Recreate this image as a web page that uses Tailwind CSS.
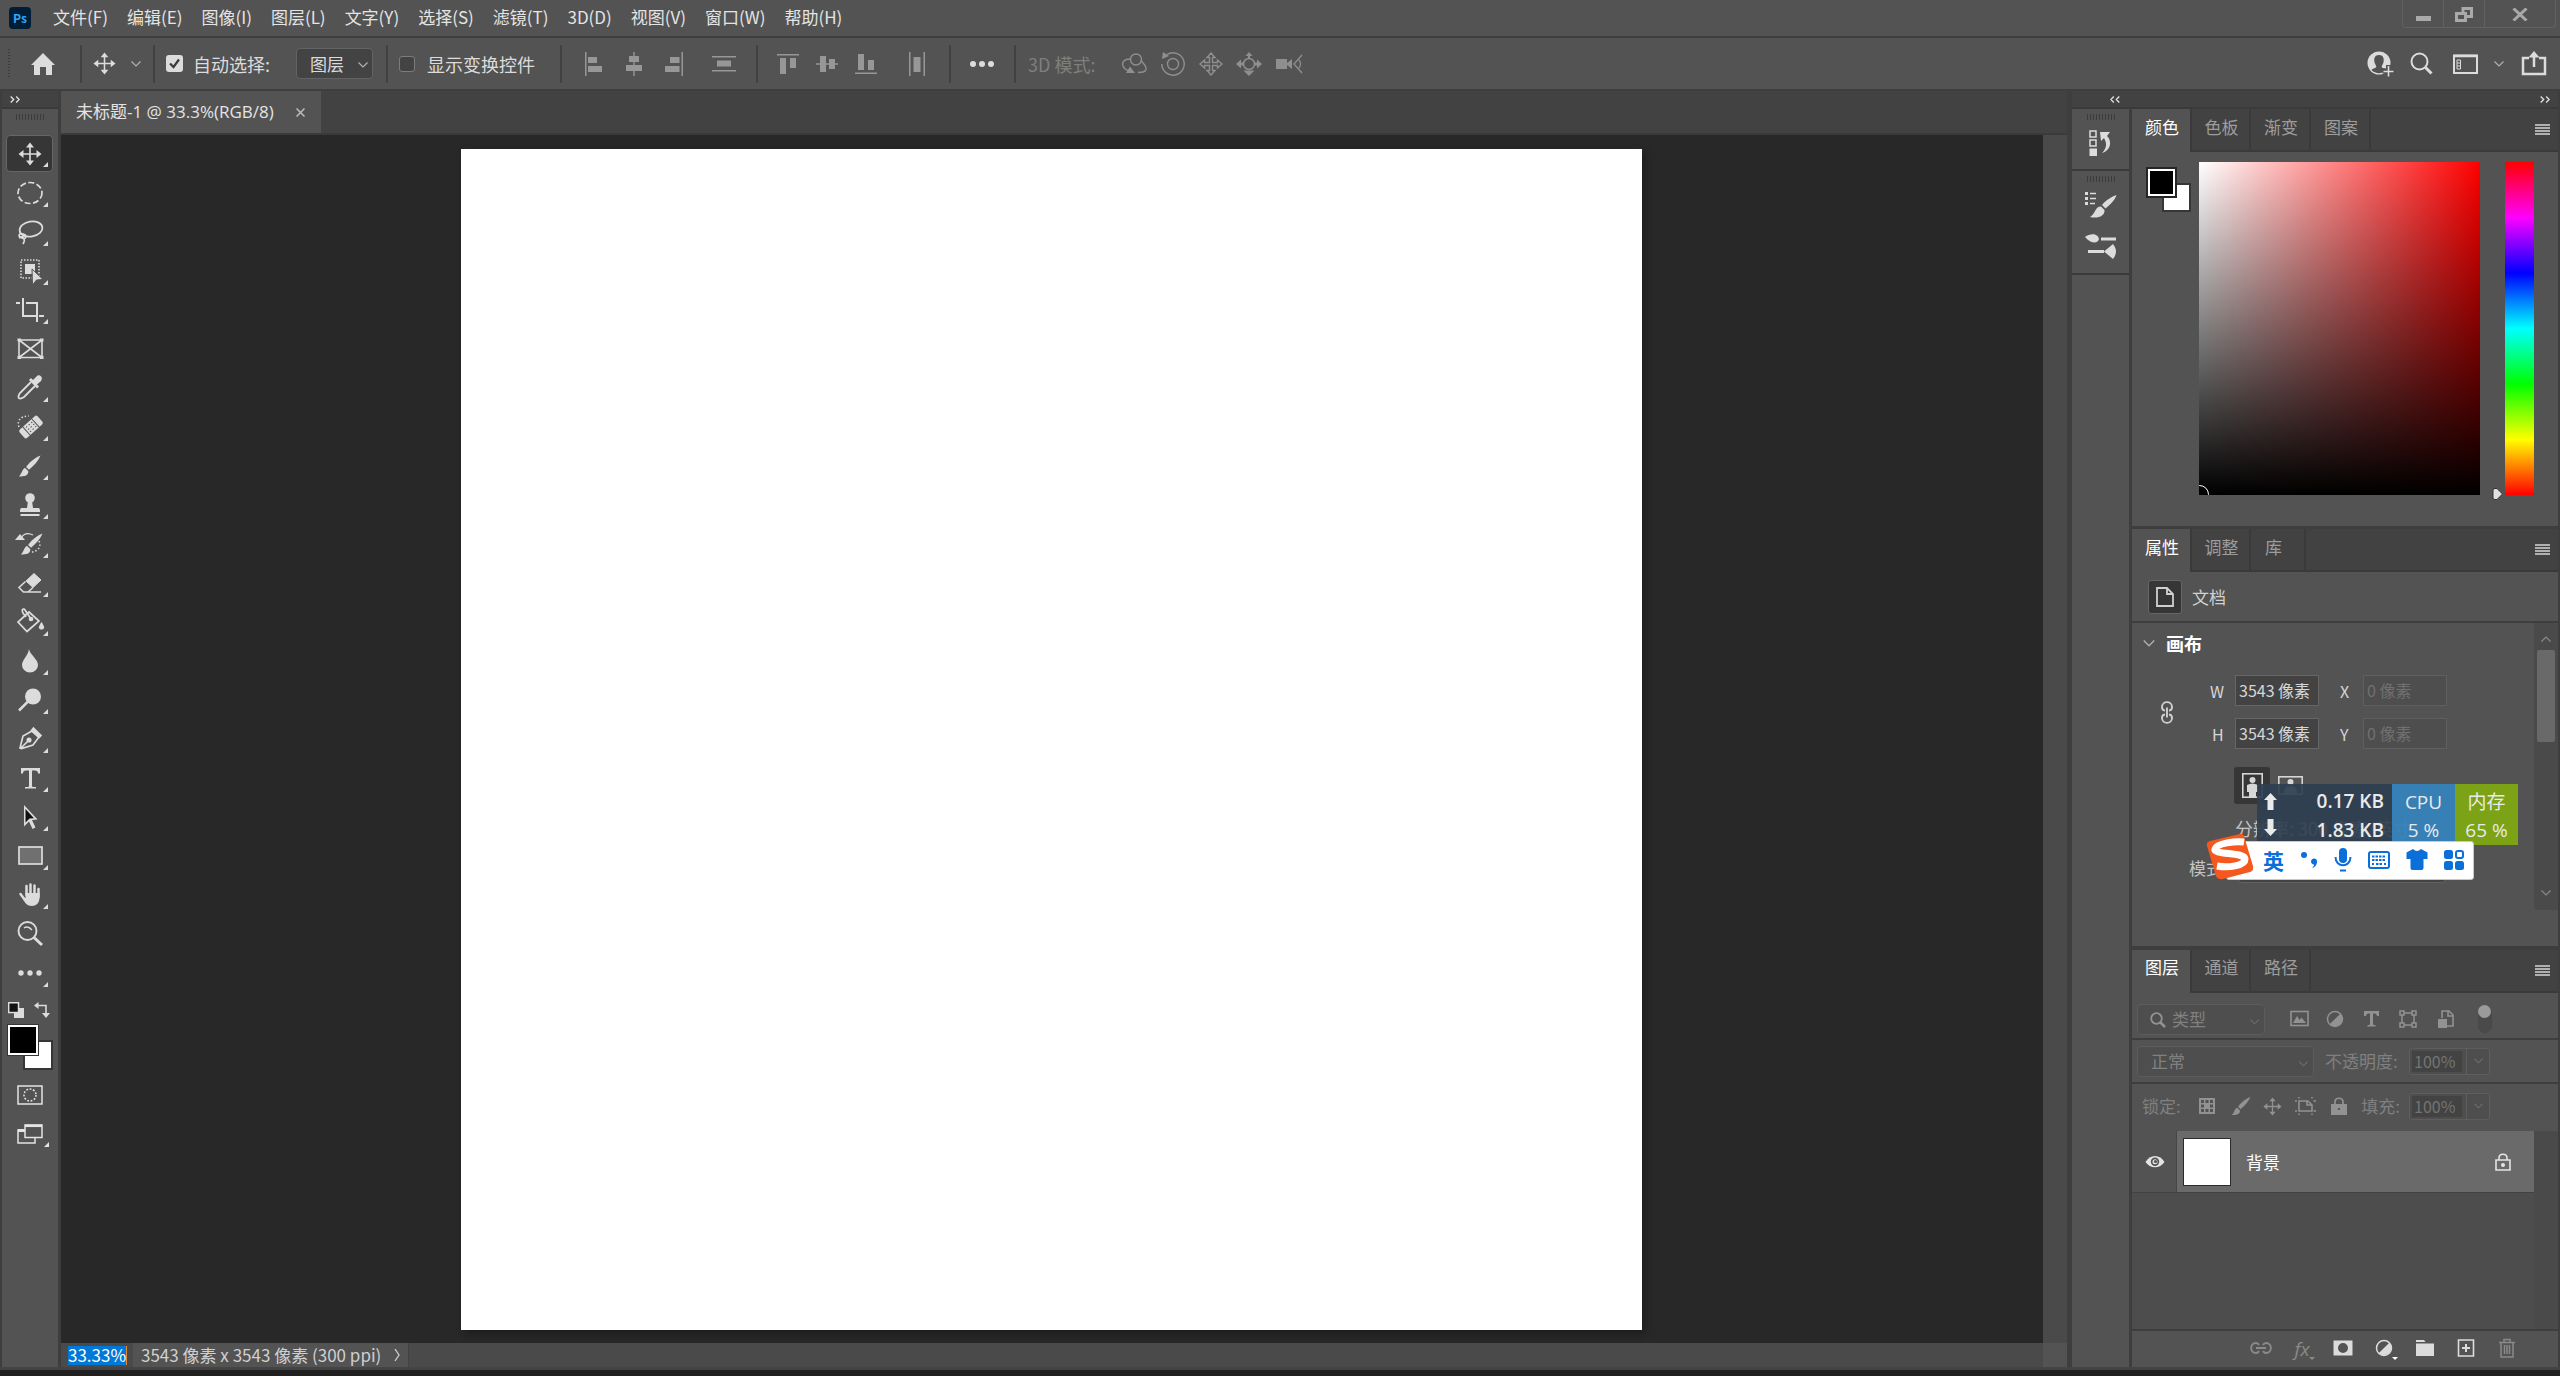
<!DOCTYPE html>
<html lang="zh-CN">
<head>
<meta charset="utf-8">
<title>未标题-1 @ 33.3%(RGB/8)</title>
<script src="https://cdn.jsdelivr.net/npm/@tailwindcss/browser@4"></script>
</head>
<body class="h-screen overflow-hidden bg-[#535353] font-['Noto_Sans_CJK_SC',sans-serif] text-[17px] leading-6 text-[#e4e4e4]">
<svg class="hidden">
  <symbol id="chev" viewBox="0 0 10 6"><path d="M.5 .5L5 5L9.5 .5" fill="none" stroke="currentColor" stroke-width="1.2"/></symbol>
  <symbol id="corner" viewBox="0 0 5 5"><path d="M5 0V5H0Z" fill="currentColor"/></symbol>
  <symbol id="move" viewBox="0 0 24 24"><path d="M12 3V21M3 12H21" stroke="currentColor" stroke-width="1.6"/><path d="M12 .5L16 5.500H8ZM12 23.500L8 18.500H16ZM.5 12L5.500 8V16ZM23.500 12L18.500 16V8Z" fill="currentColor"/></symbol>
  <symbol id="brush" viewBox="0 0 24 24"><path d="M23.500 1C17 3.500 11 9 8.500 13L11.500 16C16 12 21 7 23.500 1Z" fill="currentColor"/><path d="M7.500 14C4.500 14.500 5 18 1 23C6 23 11 22.500 10.800 17.500Z" fill="currentColor"/></symbol>
  <symbol id="menu" viewBox="0 0 15 11"><path d="M0 1H15M0 4H15M0 7H15M0 10H15" stroke="currentColor" stroke-width="2"/></symbol>
  <symbol id="grip" viewBox="0 0 28 6"><path d="M.5 0V6M3.500 0V6M6.500 0V6M9.500 0V6M12.500 0V6M15.500 0V6M18.500 0V6M21.500 0V6M24.500 0V6M27.500 0V6" stroke="#3c3c3c"/></symbol>
  <symbol id="dbl" viewBox="0 0 10 7"><path d="M.7 .5L3.700 3.500L.7 6.500M6.200 .5L9.200 3.500L6.200 6.500" fill="none" stroke="currentColor" stroke-width="1.3"/></symbol>
  <symbol id="half" viewBox="0 0 18 18"><circle cx="9" cy="9" r="7.500" fill="none" stroke="currentColor" stroke-width="1.500"/><path d="M14.300 3.700A7.500 7.500 0 0 1 3.700 14.300Z" fill="currentColor"/></symbol>
</svg>
<div class="flex h-full flex-col">

<!-- menu bar -->
<header class="flex h-[36px] shrink-0 items-start">
  <div class="ml-[9px] mt-[7px] flex size-[22px] items-center justify-center rounded-[4px] bg-[#001e36] text-[12px] leading-[22px] font-bold text-[#31a8ff]">Ps</div>
  <nav class="ml-[22px] flex gap-[19px] pt-[5px]">
    <a href="#">文件(F)</a><a href="#">编辑(E)</a><a href="#">图像(I)</a><a href="#">图层(L)</a><a href="#">文字(Y)</a><a href="#">选择(S)</a><a href="#">滤镜(T)</a><a href="#">3D(D)</a><a href="#">视图(V)</a><a href="#">窗口(W)</a><a href="#">帮助(H)</a>
  </nav>
  <div class="mr-[4px] ml-auto flex h-[28px] rounded-b border border-t-0 border-[#616161] text-[#a9a9a9]">
    <button aria-label="最小化" class="flex w-[41px] justify-center border-r border-[#616161] pt-[16px]"><span class="h-[5px] w-[15px] bg-[#a9a9a9]"></span></button>
    <button aria-label="还原" class="flex w-[41px] justify-center border-r border-[#616161] pt-[7px]"><svg width="18" height="15" fill="none" stroke="currentColor" stroke-width="3"><path d="M8 5V1.500H16.500V9.500H12"/><path d="M1.500 6.500H10.500V13.500H1.500Z"/></svg></button>
    <button aria-label="关闭" class="flex w-[70px] justify-center pt-[8px]"><svg width="16" height="13" stroke="currentColor" stroke-width="3"><path d="M1.500 .5L14.500 12.500M14.500 .5L1.500 12.500"/></svg></button>
  </div>
</header>

<!-- options bar -->
<div class="flex h-[55px] shrink-0 items-center border-y-2 border-[#3e3e3e] text-[18px] text-[#dcdcdc]">
  <svg class="ml-[8px]" width="2" height="30"><path d="M1 0V30" stroke="#3c3c3c" stroke-width="2" stroke-dasharray="1 2"/></svg>
  <button aria-label="主页" class="ml-[20px]"><svg width="26" height="24" viewBox="0 0 26 24"><path d="M13 1L25 13H22V23H16V15H10V23H4V13H1Z" fill="currentColor"/></svg></button>
  <span class="ml-[24px] h-[38px] w-[2px] bg-[#414141]"></span>
  <button aria-label="移动工具" class="ml-[11px] flex items-center gap-[15px]"><svg width="23" height="23"><use href="#move"/></svg><svg width="10" height="6" class="text-[#b0b0b0]"><use href="#chev"/></svg></button>
  <span class="ml-[12px] h-[38px] w-[2px] bg-[#414141]"></span>
  <label class="ml-[11px] flex items-center gap-[10px]">
    <span class="relative flex"><input type="checkbox" checked class="size-[17px] appearance-none rounded-[3px] bg-[#dcdcdc]"><svg class="absolute top-[3px] left-[3px]" width="11" height="11"><path d="M1 5.500L4.500 9L10 1.500" fill="none" stroke="#3a3a3a" stroke-width="2.200"/></svg></span>自动选择:</label>
  <div class="relative ml-[26px]"><select aria-label="自动选择" class="h-[31px] w-[77px] appearance-none rounded-[4px] border border-[#636363] bg-[#434343] pl-[13px] text-[17px] leading-6"><option>图层</option></select><svg class="absolute top-[14px] right-[5px] text-[#b0b0b0]" width="10" height="6"><use href="#chev"/></svg></div>
  <span class="ml-[13px] h-[38px] w-[2px] bg-[#414141]"></span>
  <label class="ml-[11px] flex items-center gap-[12px]"><input type="checkbox" class="size-[16px] appearance-none rounded-[3px] border border-[#7c7c7c] bg-[#434343]">显示变换控件</label>
  <span class="ml-[25px] h-[38px] w-[2px] bg-[#414141]"></span>
  <div class="ml-[20px] flex items-center gap-[16px] text-[#979797]">
    <button aria-label="左对齐"><svg width="24" height="24" viewBox="0 0 24 24" fill="currentColor"><path d="M3 0H4.500V24H3ZM6 5H15V11H6ZM6 14H20V20H6Z"/></svg></button>
    <button aria-label="水平居中对齐"><svg width="24" height="24" viewBox="0 0 24 24" fill="currentColor"><path d="M11.300 0H12.700V24H11.300ZM7 4H17V10H7ZM4 13H20V19H4Z"/></svg></button>
    <button aria-label="右对齐"><svg width="24" height="24" viewBox="0 0 24 24" fill="currentColor"><path d="M19.500 0H21V24H19.500ZM8 5H17.500V11H8ZM3 14H17.500V20H3Z"/></svg></button>
    <button aria-label="垂直分布" class="ml-[10px]"><svg width="24" height="24" viewBox="0 0 24 24" fill="currentColor"><path d="M0 4H24V5.500H0ZM5 8.500H19V14.500H5ZM0 18H24V19.500H0Z"/></svg></button>
  </div>
  <span class="ml-[20px] h-[38px] w-[2px] bg-[#414141]"></span>
  <div class="ml-[18px] flex items-center gap-[15px] text-[#979797]">
    <button aria-label="顶对齐"><svg width="24" height="24" viewBox="0 0 24 24" fill="currentColor"><path d="M1 2H23V3.500H1ZM4 6H10V22H4ZM14 6H20V16H14Z"/></svg></button>
    <button aria-label="垂直居中对齐"><svg width="24" height="24" viewBox="0 0 24 24" fill="currentColor"><path d="M1 11.200H23V12.800H1ZM5 4H11V20H5ZM14 7H20V17H14Z"/></svg></button>
    <button aria-label="底对齐"><svg width="24" height="24" viewBox="0 0 24 24" fill="currentColor"><path d="M1 20.500H23V22H1ZM4 2H10V18H4ZM14 8H20V18H14Z"/></svg></button>
    <button aria-label="水平分布" class="ml-[12px]"><svg width="24" height="24" viewBox="0 0 24 24" fill="currentColor"><path d="M4 0H5.500V24H4ZM8.500 5H15.500V20H8.500ZM18.500 0H20V24H18.500Z"/></svg></button>
  </div>
  <span class="ml-[20px] h-[38px] w-[2px] bg-[#414141]"></span>
  <button aria-label="更多选项" class="ml-[19px]"><svg width="24" height="6" fill="currentColor"><circle cx="3" cy="3" r="3"/><circle cx="12" cy="3" r="3"/><circle cx="21" cy="3" r="3"/></svg></button>
  <span class="ml-[20px] h-[38px] w-[2px] bg-[#414141]"></span>
  <span class="ml-[12px] w-[70px] whitespace-nowrap text-[#7f7f7f]">3D 模式:</span>
  <div class="ml-[23px] flex items-center gap-[13px] text-[#8f8f8f]">
    <svg width="26" height="24" viewBox="0 0 26 24" fill="none" stroke="currentColor" stroke-width="1.400"><circle cx="15" cy="7.500" r="5.500"/><path d="M9 7C3 7 .8 10 2 14C3 16 4.500 18 7 18.500M20 8C22 12 26 14 25 17.500C24 20.500 21 20.500 17 20.500"/><path d="M9 14.500L5 21H14Z" fill="currentColor" stroke="none"/></svg>
    <svg width="26" height="24" viewBox="0 0 26 24" fill="none" stroke="currentColor" stroke-width="1.400"><circle cx="13" cy="12" r="5.500"/><path d="M7 2.500A11.200 11.200 0 1 1 1.800 12"/><path d="M2 7L3 0L9 4Z" fill="currentColor" stroke="none"/></svg>
    <svg width="24" height="24" viewBox="0 0 24 24" fill="none" stroke="currentColor" stroke-width="1.400"><path d="M12 1L16 5.500H13.500V10.500H18.500V8L23 12L18.500 16V13.500H13.500V18.500H16L12 23L8 18.500H10.500V13.500H5.500V16L1 12L5.500 8V10.500H10.500V5.500H8Z"/></svg>
    <svg width="26" height="24" viewBox="0 0 26 24" fill="currentColor"><circle cx="13" cy="12" r="5.500" fill="none" stroke="currentColor" stroke-width="1.500"/><path d="M13 0L16.500 4H14V6H12V4H9.500ZM13 24L7.500 18.500H18.500ZM0 12L5 7.500V10.500H8V13.500H5V16.500ZM26 12L21 7.500V10.500H18V13.500H21V16.500Z"/></svg>
    <svg width="28" height="24" viewBox="0 0 28 24" fill="currentColor"><path d="M1 7H12V17H1ZM12 11L17 7V17L12 13Z"/><path d="M27 3L19 12L27 21M24 8C26 10 26 14 24 16" fill="none" stroke="currentColor" stroke-width="1.300"/></svg>
  </div>
  <div class="mr-[13px] ml-auto flex items-center">
    <button aria-label="帐户"><svg width="27" height="26" viewBox="0 0 27 26"><circle cx="12" cy="12" r="11.500" fill="currentColor"/><path d="M12 4C8 4 7 7 7.300 10C7.600 13 9 14 9.300 15.500C9 17.500 6 17 4.500 19C8 23 15 23 18 20L18.500 17.500C16 17 15 17 14.700 15.500C15 14 16.400 13 16.700 10C17 7 16 4 12 4Z" fill="#535353"/><path d="M21.500 14V26M15.500 20H27" stroke="#535353" stroke-width="5"/><path d="M21.500 15V25.500M16.500 20.500H26.500" stroke="currentColor" stroke-width="1.600"/></svg></button>
    <button aria-label="搜索" class="ml-[16px]"><svg width="23" height="23" fill="none" stroke="currentColor"><circle cx="9.500" cy="9.500" r="8" stroke-width="2"/><path d="M15.500 15.500L21.500 21.500" stroke-width="3"/></svg></button>
    <button aria-label="工作区" class="ml-[20px]"><svg width="25" height="20" fill="none" stroke="currentColor"><path d="M1 1.500H24V19H1Z" stroke-width="2"/><path d="M1 2H24" stroke-width="2.500"/><path d="M4 6H7.500V15H4ZM4 9H7M4 12H7"/></svg></button>
    <svg width="10" height="6" class="ml-[16px] text-[#b0b0b0]"><use href="#chev"/></svg>
    <button aria-label="共享" class="ml-[17px]"><svg width="26" height="25" fill="none" stroke="currentColor" stroke-width="2.500"><path d="M8 7H2V23H24V7H18M13 4V16"/><path d="M13 0L18.500 6.500H7.500Z" fill="currentColor" stroke="none"/></svg></button>
  </div>
</div>

<!-- workspace -->
<div class="flex min-h-0 flex-1">

  <!-- tools -->
  <aside class="flex w-[61px] shrink-0 flex-col border-r-[3px] border-l-2 border-[#3e3e3e]">
    <div class="flex h-[18px] shrink-0 items-center border-b-2 border-[#3a3a3a] bg-[#424242] pl-[8px]"><svg width="10" height="7"><use href="#dbl"/></svg></div>
    <div class="flex h-[25px] shrink-0 justify-center pt-[5px]"><svg width="28" height="6"><use href="#grip"/></svg></div>
    <div class="flex flex-col pr-[5px] pl-[4px] text-[#dcdcdc]">
      <button aria-label="移动" class="relative my-px flex h-[37px] items-center justify-center rounded-[4px] border border-[#666] bg-[#363636]"><svg width="24" height="24"><use href="#move"/></svg><svg class="absolute right-[4px] bottom-[4px]" width="5" height="5"><use href="#corner"/></svg></button>
      <button aria-label="椭圆选框" class="relative flex h-[39px] items-center justify-center"><svg width="30" height="30" fill="none" stroke="currentColor" stroke-width="1.700"><ellipse cx="15" cy="15" rx="12" ry="10.500" stroke-dasharray="6 2.500"/></svg><svg class="absolute right-[5px] bottom-[5px]" width="5" height="5"><use href="#corner"/></svg></button>
      <button aria-label="套索" class="relative flex h-[39px] items-center justify-center"><svg width="30" height="30" fill="none" stroke="currentColor" stroke-width="1.700"><ellipse cx="16" cy="12" rx="11.500" ry="7.500" transform="rotate(-10 16 12)"/><ellipse cx="7.500" cy="19" rx="3.500" ry="2" transform="rotate(20 7.500 19)"/><path d="M4 21L11 18M7 20C11 22 9 25 8 27"/></svg><svg class="absolute right-[5px] bottom-[5px]" width="5" height="5"><use href="#corner"/></svg></button>
      <button aria-label="对象选择" class="relative flex h-[39px] items-center justify-center"><svg width="30" height="30"><rect x="6" y="4" width="18" height="18" fill="none" stroke="currentColor" stroke-width="1.600" stroke-dasharray="1.500 1.500"/><path d="M10 8H20V18H10Z" fill="currentColor"/><path d="M17 13L28 23.500L21.500 24L17.500 29Z" fill="currentColor" stroke="#535353"/></svg><svg class="absolute right-[5px] bottom-[5px]" width="5" height="5"><use href="#corner"/></svg></button>
      <button aria-label="裁剪" class="relative flex h-[39px] items-center justify-center"><svg width="30" height="30" fill="none" stroke="currentColor" stroke-width="2"><path d="M1 8H5M8 3V21H22M11 8H22V27M24 21H29"/></svg><svg class="absolute right-[5px] bottom-[5px]" width="5" height="5"><use href="#corner"/></svg></button>
      <button aria-label="图框" class="relative flex h-[39px] items-center justify-center"><svg width="30" height="30" fill="none" stroke="currentColor" stroke-width="1.600"><path d="M4 6H27V23.500H4ZM4 6L27 23.500M27 6L4 23.500"/><path d="M2.500 4.500H6V7.500H2.500ZM25 4.500H28.500V7.500H25ZM2.500 22H6V25H2.500ZM25 22H28.500V25H25Z" fill="currentColor" stroke="none"/></svg></button>
      <button aria-label="吸管" class="relative flex h-[39px] items-center justify-center"><svg width="30" height="30"><path d="M16 9L5 20C3 23 3 25 4.500 25.500C6 26 7.500 25 9 24L20 13" fill="none" stroke="currentColor" stroke-width="1.800"/><path d="M14 7L16 5L18 7L22 3C24 1 29 4 26 8L22 11.500L24 13.500L22 15.500Z" fill="currentColor"/></svg><svg class="absolute right-[5px] bottom-[5px]" width="5" height="5"><use href="#corner"/></svg></button>
      <button aria-label="污点修复" class="relative flex h-[39px] items-center justify-center"><svg width="30" height="30"><path d="M4 15C2 10 4 4 14 4" fill="none" stroke="currentColor" stroke-width="1.500" stroke-dasharray="1.500 2"/><g transform="rotate(-42 16 15)"><rect x="4" y="9.500" width="24" height="11" rx="2" fill="currentColor"/><path d="M10 9V21M22 9V21" stroke="#535353"/><path d="M12 12H21M12 15H21M12 18H21" stroke="#535353" stroke-dasharray="1.500 2"/></g></svg><svg class="absolute right-[5px] bottom-[5px]" width="5" height="5"><use href="#corner"/></svg></button>
      <button aria-label="画笔" class="relative flex h-[39px] items-center justify-center"><svg width="23" height="24"><use href="#brush"/></svg><svg class="absolute right-[5px] bottom-[5px]" width="5" height="5"><use href="#corner"/></svg></button>
      <button aria-label="仿制图章" class="relative flex h-[39px] items-center justify-center"><svg width="30" height="30" fill="currentColor"><circle cx="15" cy="8" r="4.800"/><path d="M13 11H17L18 18H24C25 19 25 20 25 22H5C5 20 5 19 6 18H12ZM5.500 24H24.500V26H5.500Z"/></svg><svg class="absolute right-[5px] bottom-[5px]" width="5" height="5"><use href="#corner"/></svg></button>
      <button aria-label="历史记录画笔" class="relative flex h-[39px] items-center justify-center"><svg width="30" height="30"><g transform="translate(5 3)"><use href="#brush" width="23" height="24"/></g><path d="M0 11L5 5L10 11Z" fill="currentColor"/><path d="M6 9C9 4 14 4 18 6" fill="none" stroke="currentColor" stroke-width="1.200"/><path d="M24 12C27 18 22 23 16 23" fill="none" stroke="currentColor" stroke-width="1.500" stroke-dasharray="1.500 2"/></svg><svg class="absolute right-[5px] bottom-[5px]" width="5" height="5"><use href="#corner"/></svg></button>
      <button aria-label="橡皮擦" class="relative flex h-[39px] items-center justify-center"><svg width="30" height="30"><path d="M11 13L19 5.500L26 12L18 19.500Z" fill="currentColor" stroke="currentColor"/><path d="M10.500 13.500L4 19.500L8.500 24H13L18 19.500M13 24H26" fill="none" stroke="currentColor" stroke-width="1.600"/></svg><svg class="absolute right-[5px] bottom-[5px]" width="5" height="5"><use href="#corner"/></svg></button>
      <button aria-label="油漆桶" class="relative flex h-[39px] items-center justify-center"><svg width="30" height="30" fill="none" stroke="currentColor" stroke-width="1.700"><path d="M14 5L3 15L12 24.500L24 14Z"/><path d="M16 12L10 3C9 1 6 2 8 6L11 10"/><circle cx="16" cy="12" r="1.500" fill="currentColor"/><path d="M26.500 15C24 19 23.500 20 24 21C25 23 28 23 29 21C29.500 20 29 19 26.500 15Z" fill="currentColor" stroke="none"/></svg><svg class="absolute right-[5px] bottom-[5px]" width="5" height="5"><use href="#corner"/></svg></button>
      <button aria-label="模糊" class="relative flex h-[39px] items-center justify-center"><svg width="30" height="30"><path d="M14 3C15 9 23 13 23 19A8 7.500 0 0 1 7 19C7 14 13 10 14 3Z" fill="currentColor"/></svg><svg class="absolute right-[5px] bottom-[5px]" width="5" height="5"><use href="#corner"/></svg></button>
      <button aria-label="减淡" class="relative flex h-[39px] items-center justify-center"><svg width="30" height="30"><circle cx="18" cy="11.500" r="8" fill="currentColor"/><path d="M12.500 17L4 25.500" stroke="currentColor" stroke-width="2.500"/></svg><svg class="absolute right-[5px] bottom-[5px]" width="5" height="5"><use href="#corner"/></svg></button>
      <button aria-label="钢笔" class="relative flex h-[39px] items-center justify-center"><svg width="30" height="30" fill="none" stroke="currentColor" stroke-width="1.700"><path d="M17 7L8 12L5 24L6.500 24.500L18 21L24 13ZM6 24L13 17"/><circle cx="14" cy="16" r="1.700" fill="currentColor"/><path d="M18.500 4L26 11.500L24 13.500L16.500 6.500Z" fill="currentColor"/></svg><svg class="absolute right-[5px] bottom-[5px]" width="5" height="5"><use href="#corner"/></svg></button>
      <button aria-label="文字" class="relative flex h-[39px] items-center justify-center"><svg width="30" height="30" fill="currentColor"><path d="M6 5H25V10.500H23C23 8 22 7.500 17 7.500V23C17 24 18 24 21 24V25.500H10V24C13 24 14 24 14 23V7.500C9 7.500 8 8 8 10.500H6Z"/></svg><svg class="absolute right-[5px] bottom-[5px]" width="5" height="5"><use href="#corner"/></svg></button>
      <button aria-label="路径选择" class="relative flex h-[39px] items-center justify-center"><svg width="30" height="30"><path d="M9 3V24.500L14 19.500L17.500 27L20.500 25.500L17 18L22.500 17.500Z" fill="currentColor"/><path d="M10.500 7V20.500L14.500 16.500L19 16.200Z" fill="#111"/></svg><svg class="absolute right-[5px] bottom-[5px]" width="5" height="5"><use href="#corner"/></svg></button>
      <button aria-label="矩形" class="relative flex h-[39px] items-center justify-center"><svg width="30" height="30"><rect x="4" y="6" width="23" height="17" fill="#707070" stroke="currentColor" stroke-width="1.700"/></svg><svg class="absolute right-[5px] bottom-[5px]" width="5" height="5"><use href="#corner"/></svg></button>
      <button aria-label="抓手" class="relative flex h-[39px] items-center justify-center"><svg width="30" height="30" fill="none" stroke="currentColor" stroke-width="2.500" stroke-linecap="round"><path d="M11.500 15V6M15.500 14V4.500M19.500 15V5.500M23.500 17V9M5.500 14L10 20"/><path d="M10.500 13H24.500V18C24.500 23 21 26 17 26C11 26 9 21 7.500 18L10.500 18Z" fill="currentColor" stroke="none"/></svg><svg class="absolute right-[5px] bottom-[5px]" width="5" height="5"><use href="#corner"/></svg></button>
      <button aria-label="缩放" class="relative flex h-[39px] items-center justify-center"><svg width="30" height="30" fill="none" stroke="currentColor"><circle cx="12.500" cy="12" r="9" stroke-width="1.900"/><path d="M19 18.500L27 26" stroke-width="3"/><path d="M9 9C11 7.500 14 7.500 17 11" stroke-width="1.500"/></svg></button>
      <button aria-label="编辑工具栏" class="relative flex h-[39px] items-center justify-center"><svg width="30" height="30" fill="currentColor"><circle cx="6" cy="15" r="2.700"/><circle cx="15" cy="15" r="2.700"/><circle cx="24" cy="15" r="2.700"/></svg><svg class="absolute right-[5px] bottom-[5px]" width="5" height="5"><use href="#corner"/></svg></button>
    </div>
    <div class="mt-[10px] flex justify-between pr-[8px] pl-[6px] text-[#dcdcdc]">
      <button aria-label="默认颜色"><svg width="16" height="16"><path d="M6 6H16V16H6Z" fill="currentColor"/><path d="M.7 .7H10.500V10.500H.7Z" fill="#111" stroke="currentColor" stroke-width="1.500"/></svg></button>
      <button aria-label="切换颜色"><svg width="16" height="16" fill="none" stroke="currentColor" stroke-width="1.600"><path d="M4 3.500H12V12"/><path d="M0 3.500L4.500 0V7ZM12 16L8 11H16Z" fill="currentColor" stroke="none"/></svg></button>
    </div>
    <div class="mt-[7px] ml-[6px] grid grid-cols-[15px_15px_15px] grid-rows-[15px_15px_15px]">
      <button aria-label="背景色" class="col-span-2 col-start-2 row-span-2 row-start-2 border-2 border-[#363636] bg-white"></button>
      <button aria-label="前景色" class="col-span-2 col-start-1 row-span-2 row-start-1 border-2 border-white bg-black outline outline-[#363636]"></button>
    </div>
    <button aria-label="快速蒙版" class="mt-[15px] ml-[15px] w-[26px]"><svg width="26" height="20" fill="none" stroke="currentColor"><rect x="1" y="1" width="24" height="18" stroke-width="1.500"/><circle cx="13" cy="10" r="6" stroke-width="1.500" stroke-dasharray="1.800 1.600"/></svg></button>
    <button aria-label="屏幕模式" class="relative mt-[19px] ml-[15px] w-[32px]"><svg width="26" height="20" fill="none" stroke="currentColor" stroke-width="1.500"><path d="M8 6H1V19H18V14"/><path d="M1 6.500H8" stroke-width="3"/><path d="M8 1H25V13.500H8Z" fill="#535353"/><path d="M8 1.800H25" stroke-width="2.500"/></svg><svg class="absolute right-0 -bottom-[3px]" width="5" height="5"><use href="#corner"/></svg></button>
  </aside>

  <!-- document -->
  <main class="flex min-w-0 flex-1 flex-col border-r-[5px] border-[#3e3e3e]">
    <div class="flex h-[44px] shrink-0 border-b-2 border-[#3a3a3a] bg-[#424242]">
      <div class="flex w-[260px] items-center bg-[#535353] pl-[15px] font-['Open_Sans','Noto_Sans_CJK_SC',sans-serif] whitespace-nowrap">未标题-1 @ 33.3%(RGB/8)<button aria-label="关闭" class="mr-[16px] ml-auto text-[#bdbdbd]"><svg width="9" height="9" stroke="currentColor" stroke-width="1.500"><path d="M.5 .5L8.500 8.500M8.500 .5L.5 8.500"/></svg></button></div>
    </div>
    <div class="flex min-h-0 flex-1">
      <div class="flex flex-1 items-center justify-center bg-[#282828] pr-[2px]"><div class="aspect-square h-[1181px] bg-white shadow-[3px_4px_8px_rgba(0,0,0,0.3)]"></div></div>
      <div class="w-[24px] bg-[#4a4a4a]"></div>
    </div>
    <div class="flex h-[24px] shrink-0 items-center bg-[#4a4a4a]">
      <input aria-label="缩放比例" value="33.33%" class="ml-[7px] h-[19px] w-[59px] border-r border-[#e08a3c] bg-[#0078d7] text-white">
      <div class="ml-[6px] flex h-[24px] w-[276px] items-center justify-between border-r border-[#424242] bg-[#535353] pr-[8px] pl-[8px] whitespace-nowrap text-[#d0d0d0]">3543 像素 x 3543 像素 (300 ppi)<svg width="6" height="14"><path d="M1 1L5 7L1 13" fill="none" stroke="currentColor" stroke-width="1.300"/></svg></div>
      <div class="ml-auto h-full w-[24px] bg-[#535353]"></div>
    </div>
  </main>

  <!-- right docks -->
  <div class="flex w-[488px] shrink-0 flex-col border-r-2 border-[#3e3e3e]">
    <div class="flex h-[18px] shrink-0 items-center justify-between border-b-2 border-[#3a3a3a] bg-[#424242] pr-[8px] pl-[38px]"><svg class="rotate-180" width="10" height="7"><use href="#dbl"/></svg><svg width="10" height="7"><use href="#dbl"/></svg></div>
    <div class="flex min-h-0 flex-1">
      <aside class="flex w-[60px] shrink-0 flex-col border-r-[3px] border-[#3e3e3e] text-[#dcdcdc]">
        <div class="flex h-[62px] flex-col items-center border-b-2 border-[#3a3a3a] pt-[5px]"><svg width="28" height="6"><use href="#grip"/></svg>
          <button aria-label="历史记录" class="mt-[9px]"><svg width="26" height="28" fill="none" stroke="currentColor" stroke-width="1.500"><path d="M2 2H8V8H2ZM2 11H8V17H2Z"/><path d="M1.500 19.500H9V27H1.500Z" fill="currentColor" stroke="none"/><path d="M12 3H22L19 7C25 13 22 22 14 24C19 19 19 14 16 9L13 12Z" fill="currentColor" stroke="none"/></svg></button></div>
        <div class="flex h-[104px] flex-col items-center border-b-2 border-[#3a3a3a] pt-[5px]"><svg width="28" height="6"><use href="#grip"/></svg>
          <button aria-label="画笔设置" class="mt-[9px]"><svg width="32" height="28" fill="currentColor"><path d="M0 1H3V4H0ZM0 6H3V9H0ZM0 11H3V14H0Z"/><path d="M5 2.500H11M5 7.500H11M5 12.500H10" stroke="currentColor" stroke-width="1.500"/><path d="M31.500 4C26 6 20 10 17 14L20.500 17.500C25 14 30 9 31.500 4Z"/><path d="M16 15.500C10 15.500 11 22 5 26C13 28 20 25 19.500 19Z"/></svg></button>
          <button aria-label="画笔" class="mt-[15px]"><svg width="32" height="26" fill="currentColor"><path d="M0 3C5 -1 13 -1 14 5C13 10 6 10 0 3ZM16 3.500H31V6.500H16ZM3 16H19V19H3ZM19 17.500L28 10C32 15 32 20 28 25Z"/></svg></button></div>
      </aside>

      <div class="flex min-w-0 flex-1 flex-col">
        <!-- colour panel -->
        <section class="flex h-[420px] shrink-0 flex-col border-b-[3px] border-[#3e3e3e]">
          <div class="flex h-[43px] shrink-0 border-b-2 border-[#3a3a3a] bg-[#424242] text-[#9d9d9d]">
            <button class="-mb-[2px] w-[60px] border-r-2 border-[#3a3a3a] bg-[#535353] pb-[8px] pl-[2px] text-white">颜色</button><button class="w-[59px] border-r-2 border-[#3a3a3a] pb-[6px] pl-[2px]">色板</button><button class="w-[60px] border-r-2 border-[#3a3a3a] pb-[6px] pl-[2px]">渐变</button><button class="w-[60px] border-r-2 border-[#3a3a3a] pb-[6px] pl-[2px]">图案</button>
            <button aria-label="面板菜单" class="mr-[8px] ml-auto"><svg width="15" height="11" class="text-[#b0b0b0]"><use href="#menu"/></svg></button>
          </div>
          <div class="flex pt-[10px]">
            <div class="mt-[5px] ml-[14px] grid h-[46px] grid-cols-[16px_15px_14px] grid-rows-[16px_15px_14px]">
              <button aria-label="背景色" class="col-span-2 col-start-2 row-span-2 row-start-2 border-2 border-[#363636] bg-white"></button>
              <button aria-label="前景色" class="col-span-2 col-start-1 row-span-2 row-start-1 m-[2px] border-2 border-white bg-black outline-2 outline-[#262626]"></button>
            </div>
            <div class="relative ml-[8px] h-[333px] w-[281px] overflow-hidden bg-[linear-gradient(to_top,#000,transparent),linear-gradient(to_right,#fff,#f00)]"><span class="absolute -bottom-[9px] -left-[9px] size-[19px] rounded-full border border-white"></span></div>
            <svg class="mt-[326px] ml-[12px]" width="11" height="12"><path d="M1 2Q1 .5 3 .5H5L10.500 6L5 11.500H3Q1 11.500 1 10Z" fill="#e0e0e0" stroke="#333"/></svg>
            <div class="ml-[2px] h-[333px] w-[29px] bg-[linear-gradient(to_bottom,#f00,#f0f_16.67%,#00f_33.33%,#0ff_50%,#0f0_66.67%,#ff0_83.33%,#f00)]"></div>
          </div>
        </section>

        <!-- properties panel -->
        <section class="flex h-[421px] shrink-0 flex-col border-b-[4px] border-[#3e3e3e]">
          <div class="flex h-[43px] shrink-0 border-b-2 border-[#3a3a3a] bg-[#424242] text-[#9d9d9d]">
            <button class="-mb-[2px] w-[60px] border-r-2 border-[#3a3a3a] bg-[#535353] pb-[8px] pl-[2px] text-white">属性</button><button class="w-[59px] border-r-2 border-[#3a3a3a] pb-[6px] pl-[2px]">调整</button><button class="w-[55px] border-r-2 border-[#3a3a3a] pr-[8px] pb-[6px]">库</button>
            <button aria-label="面板菜单" class="mr-[8px] ml-auto"><svg width="15" height="11" class="text-[#b0b0b0]"><use href="#menu"/></svg></button>
          </div>
          <div class="flex h-[51px] shrink-0 items-center border-b-2 border-[#3e3e3e] pl-[16px] text-[#d0d0d0]"><span class="mr-[10px] flex size-[34px] items-center justify-center rounded-[3px] border border-[#666] bg-[#363636]"><svg width="18" height="20" fill="none" stroke="currentColor" stroke-width="1.800"><path d="M1 1H11L17 7V19H1ZM11 1V7H17"/></svg></span>文档</div>
          <div class="flex min-h-0 flex-1">
            <div class="min-w-0 flex-1 pt-[8px]">
              <div class="flex items-center pl-[11px] text-[18px] font-bold text-white"><svg width="12" height="7" class="mr-[11px] text-[#b0b0b0]"><use href="#chev"/></svg>画布</div>
              <div class="flex pt-[20px] pl-[29px]">
                <svg class="mt-[26px]" width="12" height="23" fill="none" stroke="#d0d0d0" stroke-width="1.900"><path d="M4 9.500C1 9.500 1 7 1 6C1 -.5 11 -.5 11 6C11 7 11 9.500 8 9.500M4 13.500C1 13.500 1 16 1 17C1 23.500 11 23.500 11 17C11 16 11 13.500 8 13.500M6 6.500V16.500"/></svg>
                <div class="ml-[37px] grid grid-cols-[25px_84px_44px_84px] items-center gap-y-[12px] text-[16px] text-[#d6d6d6]">
                  <label for="w">W</label><input id="w" value="3543 像素" class="h-[31px] border border-[#666] bg-[#434343] pb-[2px] pl-[3px]"><label for="x" class="pl-[21px]">X</label><input id="x" value="0 像素" disabled class="h-[31px] border border-[#5f5f5f] bg-[#4e4e4e] pb-[2px] pl-[3px] text-[#707070]">
                  <label for="h" class="pl-[2px]">H</label><input id="h" value="3543 像素" class="h-[31px] border border-[#666] bg-[#434343] pb-[2px] pl-[3px]"><label for="y" class="pl-[21px]">Y</label><input id="y" value="0 像素" disabled class="h-[31px] border border-[#5f5f5f] bg-[#4e4e4e] pb-[2px] pl-[3px] text-[#707070]">
                </div>
              </div>
              <div class="mt-[18px] ml-[102px] flex items-center gap-[8px] text-[#d6d6d6]">
                <button aria-label="纵向" class="flex h-[37px] w-[36px] items-center justify-center rounded-[3px] bg-[#363636]"><svg width="21" height="25" fill="currentColor"><rect x=".8" y=".8" width="19.400" height="23.400" fill="none" stroke="currentColor" stroke-width="1.600"/><circle cx="10.500" cy="7" r="3"/><path d="M5 12Q10.500 9 16 12V19H14V24H7V19H5Z"/></svg></button>
                <button aria-label="横向"><svg width="25" height="19" fill="currentColor"><rect x=".8" y=".8" width="23.400" height="17.400" fill="none" stroke="currentColor" stroke-width="1.600"/><circle cx="12.500" cy="6" r="3"/><path d="M6 18Q6 10 12.500 10Q19 10 19 18Z"/></svg></button>
              </div>
              <div class="mt-[12px] ml-[103px] text-[18px] text-[#c4c4c4]">分辨率: 300 像素/英寸</div>
              <div class="mt-[12px] flex items-center pl-[57px] text-[#c4c4c4]"><label for="mode" class="w-[49px] whitespace-nowrap">模式:</label><select id="mode" class="h-[31px] w-[208px] appearance-none rounded-[4px] border border-[#636363] bg-[#434343]"></select></div>
            </div>
            <div class="flex h-[287px] w-[24px] flex-col items-center rounded-bl-sm bg-[#4a4a4a] pt-[13px] text-[#8a8a8a]"><svg class="rotate-180" width="10" height="6"><use href="#chev"/></svg><span class="mt-[8px] h-[92px] w-[18px] rounded-[2px] bg-[#696969]"></span><svg class="mt-auto mb-[14px]" width="10" height="6"><use href="#chev"/></svg></div>
          </div>
        </section>

        <!-- layers panel -->
        <section class="flex min-h-0 flex-1 flex-col">
          <div class="flex h-[43px] shrink-0 border-b-2 border-[#3a3a3a] bg-[#424242] text-[#9d9d9d]">
            <button class="-mb-[2px] w-[60px] border-r-2 border-[#3a3a3a] bg-[#535353] pb-[9px] pl-[2px] text-white">图层</button><button class="w-[59px] border-r-2 border-[#3a3a3a] pb-[7px] pl-[2px]">通道</button><button class="w-[60px] border-r-2 border-[#3a3a3a] pb-[7px] pl-[2px]">路径</button>
            <button aria-label="面板菜单" class="mr-[8px] ml-auto"><svg width="15" height="11" class="text-[#b0b0b0]"><use href="#menu"/></svg></button>
          </div>
          <div class="flex h-[47px] shrink-0 items-center border-b-2 border-[#3e3e3e] pt-[7px] pl-[5px] text-[#929292]">
            <div class="relative"><select aria-label="类型" class="h-[31px] w-[128px] appearance-none rounded-[4px] border border-[#5c5c5c] bg-[#4e4e4e] pl-[34px] leading-6 text-[#808080]"><option>类型</option></select><svg class="absolute top-[8px] left-[13px]" width="16" height="16" fill="none" stroke="currentColor"><circle cx="6.500" cy="6.500" r="5.300" stroke-width="1.800"/><path d="M10.500 10.500L15 15" stroke-width="2.500"/></svg><svg class="absolute top-[15px] right-[6px] text-[#6c6c6c]" width="9" height="6"><use href="#chev"/></svg></div>
            <div class="ml-[24px] flex items-center gap-[17px]">
              <button aria-label="像素图层"><svg width="20" height="18"><rect x="2" y="1.500" width="17" height="14" fill="none" stroke="currentColor" stroke-width="1.600"/><path d="M4 13L8 6L10.500 10L12.500 7.500L17 13Z" fill="currentColor"/></svg></button>
              <button aria-label="调整图层"><svg width="18" height="18"><use href="#half"/></svg></button>
              <button aria-label="文字图层"><svg width="20" height="18" fill="currentColor"><path d="M3 1H18V6H16C15.500 4 15 3.500 12 3.500V14C12 15 13 15 14.500 15V16.500H6.500V15C8 15 9 15 9 14V3.500C6 3.500 5.500 4 5 6H3Z"/></svg></button>
              <button aria-label="形状图层"><svg width="20" height="18" fill="none" stroke="currentColor" stroke-width="1.500"><path d="M6 3H14M6 15H14M4 5V13M16 5V13M2 1H6V5H2ZM14 1H18V5H14ZM2 13H6V17H2ZM14 13H18V17H14Z"/></svg></button>
              <button aria-label="智能对象"><svg width="20" height="18"><path d="M7 8V1H14L18 5V16H12M13 1V6H18" fill="none" stroke="currentColor" stroke-width="1.600"/><path d="M3 9H12V18H3Z" fill="currentColor"/></svg></button>
            </div>
            <button aria-label="滤镜开关" class="ml-[23px] h-[27px] w-[14px] rounded-full border border-[#494949] bg-[#4a4a4a]"><span class="-mt-[14px] -ml-px block size-[13px] rounded-full bg-[#9a9a9a]"></span></button>
          </div>
          <div class="flex h-[44px] shrink-0 items-center border-b-2 border-[#3e3e3e] pl-[5px] text-[#808080]">
            <div class="relative"><select aria-label="混合模式" class="h-[31px] w-[177px] appearance-none rounded-[4px] border border-[#5c5c5c] bg-[#4e4e4e] pl-[13px] leading-6"><option>正常</option></select><svg class="absolute top-[15px] right-[6px] text-[#6c6c6c]" width="9" height="6"><use href="#chev"/></svg></div>
            <label for="op" class="ml-[11px] w-[84px] whitespace-nowrap">不透明度:</label>
            <div class="flex h-[27px] w-[81px] rounded-[3px] border border-[#5e5e5e] bg-[#4e4e4e] text-[16px]"><input id="op" value="100%" class="m-[2px] w-[50px] bg-[#434343] pl-[2px] text-[#737373]"><button aria-label="不透明度滑块" class="ml-auto flex w-[23px] items-center justify-center border-l border-[#5e5e5e] text-[#6c6c6c]"><svg width="9" height="6"><use href="#chev"/></svg></button></div>
          </div>
          <div class="flex h-[47px] shrink-0 items-center pb-[3px] pl-[10px] text-[#929292]">
            <span class="w-[56px] text-[#808080]">锁定:</span>
            <div class="flex items-center gap-[15px]">
              <button aria-label="锁定透明像素"><svg width="18" height="18"><rect x="1" y="1" width="16" height="16" fill="currentColor"/><path d="M3 3H6V6H3ZM12 3H15V6H12ZM3 12H6V15H3ZM12 12H15V15H12ZM7.500 3H10.500V6H7.500ZM3 7.500H6V10.500H3ZM12 7.500H15V10.500H12ZM7.500 12H10.500V15H7.500Z" fill="#535353"/></svg></button>
              <button aria-label="锁定图像像素"><svg width="20" height="20"><use href="#brush"/></svg></button>
              <button aria-label="锁定位置" class="-ml-[3px]"><svg width="19" height="19"><use href="#move"/></svg></button>
              <button aria-label="防止嵌套" class="-ml-[2px]"><svg width="21" height="18" fill="none" stroke="currentColor" stroke-width="1.600"><path d="M4 4H13L17 8V14H4ZM12 4V8H17M0 4H2M18.500 4H21M0 14H2M18.500 14H21M4 0V1.500M17 0V1.500M4 16.500V18M17 16.500V18"/></svg></button>
              <button aria-label="锁定全部"><svg width="16" height="18"><path d="M0 7H16V18H0ZM6.500 12A1.600 1.600 0 0 0 9.500 12A1.600 1.600 0 0 0 6.500 12Z" fill="currentColor" fill-rule="evenodd"/><path d="M4 7V5C4 0 12 0 12 5V7" fill="none" stroke="currentColor" stroke-width="1.700"/></svg></button>
            </div>
            <label for="fill" class="mr-[9px] ml-auto whitespace-nowrap text-[#808080]">填充:</label>
            <div class="mr-[68px] flex h-[27px] w-[81px] rounded-[3px] border border-[#5e5e5e] bg-[#4e4e4e] text-[16px]"><input id="fill" value="100%" class="m-[2px] w-[50px] bg-[#434343] pl-[2px] text-[#737373]"><button aria-label="填充滑块" class="ml-auto flex w-[23px] items-center justify-center border-l border-[#5e5e5e] text-[#6c6c6c]"><svg width="9" height="6"><use href="#chev"/></svg></button></div>
          </div>
          <div class="flex min-h-0 flex-1 bg-[#4d4d4d]">
            <div class="flex-1">
              <div class="flex h-[62px] items-center border-b border-[#424242] bg-[#6a6a6a]">
                <button aria-label="可见性" class="flex h-full w-[45px] items-center justify-center border-r border-[#464646] bg-[#535353] pl-[2px]"><svg width="20" height="14"><path d="M.5 7C5 -1 15 -1 19.500 7C15 14 5 14 .5 7Z" fill="currentColor"/><circle cx="10" cy="6.800" r="4.200" fill="#535353"/><circle cx="10" cy="6.800" r="2.500" fill="currentColor"/><circle cx="10.500" cy="6.500" r="1.600" fill="#535353"/></svg></button>
                <div class="ml-[6px] size-[48px] border border-[#2a2a2a] bg-white"></div>
                <span class="ml-[15px] text-white">背景</span>
                <svg class="mr-[23px] ml-auto" width="16" height="18" fill="none" stroke="currentColor" stroke-width="1.600"><path d="M1 7H15V17H1ZM4 7V5C4 0 12 0 12 5V7"/><circle cx="8" cy="12" r="1.200" fill="currentColor"/></svg>
              </div>
            </div>
            <div class="w-[24px] bg-[#4a4a4a]"></div>
          </div>
          <div class="flex h-[38px] shrink-0 items-center justify-end gap-[19px] border-t-2 border-[#3e3e3e] pr-[40px] pb-[2px] text-[#dcdcdc]">
            <button aria-label="链接图层" class="text-[#8a8a8a]"><svg width="22" height="20" fill="none" stroke="currentColor" stroke-width="1.900"><path d="M9 7C8 5 7 5 6 5C-.5 5 -.5 15 6 15C7 15 8 15 9 13M13 7C14 5 15 5 16 5C22.500 5 22.500 15 16 15C15 15 14 15 13 13M6 10H16"/></svg></button>
            <button aria-label="图层样式" class="relative w-[22px] text-[19px] leading-5 text-[#8a8a8a] italic"><span class="font-['Open_Sans',sans-serif]">fx</span><svg class="absolute -right-[2px] -bottom-px" width="6" height="3" fill="currentColor"><path d="M0 0H6L3 3Z"/></svg></button>
            <button aria-label="蒙版"><svg width="22" height="20"><path d="M1.500 2.500H20.500V17.500H1.500ZM6 10A5 5 0 0 0 16 10A5 5 0 0 0 6 10Z" fill="currentColor" fill-rule="evenodd"/></svg></button>
            <button aria-label="调整图层" class="relative flex w-[22px] justify-center"><svg width="18" height="18"><use href="#half"/></svg><svg class="absolute -right-[3px] -bottom-[3px]" width="6" height="3" fill="#fff"><path d="M0 0H6L3 3Z"/></svg></button>
            <button aria-label="新建组"><svg width="22" height="20" fill="currentColor"><path d="M2 2H10L11.500 4H2ZM2 5.500H20V18H2Z"/></svg></button>
            <button aria-label="新建图层"><svg width="22" height="20" fill="none" stroke="currentColor"><path d="M3.500 2H18.500V18H3.500Z" stroke-width="1.600"/><path d="M11 6V14M7 10H15" stroke-width="2"/></svg></button>
            <button aria-label="删除图层" class="text-[#8a8a8a]"><svg width="22" height="20" fill="none" stroke="currentColor" stroke-width="1.500"><path d="M3 4.500H19M8 4V1.500H14V4M5 5V19H17V5M8.500 7V16M11 7V16M13.500 7V16"/></svg></button>
          </div>
        </section>
      </div>
    </div>
  </div>
</div>

<!-- window edge and desktop strip -->
<div class="flex h-[9px] shrink-0 justify-center border-t-[3px] border-[#444] bg-[#202020]"></div>
</div>

<!-- traffic monitor floating over the panels -->
<div class="absolute top-[784px] right-[42px] flex h-[61px] font-['Open_Sans','Noto_Sans_CJK_SC',sans-serif] text-[19px] leading-[29px] text-[#eaeaea]">
  <div class="flex h-[58px] w-[135px] justify-between bg-[#2f3f50]/92 pt-[3px] pr-[8px] pl-[7px] font-semibold">
    <div class="flex flex-col gap-[8px] pt-[6px]"><svg width="13" height="18"><path d="M6.500 0L13 7H9.500V17H3.500V7H0Z" fill="currentColor"/></svg><svg width="13" height="18"><path d="M6.500 17L0 10H3.500V0H9.500V10H13Z" fill="currentColor"/></svg></div>
    <div class="text-right"><div>0.17 KB</div><div>1.83 KB</div></div>
  </div>
  <div class="w-[63px] bg-[#3782ba]/97 pt-[4px] text-center"><div>CPU</div><div class="-mt-px">5 %</div></div>
  <div class="w-[63px] bg-[#7ba315] pt-[4px] text-center"><div>内存</div><div class="-mt-px">65 %</div></div>
</div>

<!-- input method bar -->
<div class="absolute top-[833px] right-[86px] flex h-[47px] items-end text-[#0a6fd8]">
  <svg class="z-10 -mr-[28px]" width="48" height="47"><path d="M4 8L34 1Q37 0 38 3L47 33Q48 38 44 39L17 46Q12 47 10 43L1 13Q0 9 4 8Z" fill="#f4581e"/><path d="M38 9C30 8 11 10 9 16C7 22 39 19 39 26C39 33 22 35 11 33" fill="none" stroke="#fff" stroke-width="7"/></svg>
  <div class="flex h-[39px] w-[248px] items-center justify-between rounded-[3px] border border-[#b9cbe6] bg-white pr-[9px] pb-[2px] pl-[36px]">
    <button class="text-[21px] leading-6 font-bold">英</button>
    <button aria-label="标点"><svg width="18" height="18" fill="currentColor"><circle cx="4" cy="4" r="3"/><path d="M11 10A3 3 0 1 1 17 11C17 14 14 17 12 17C13 16 14 15 14 13.500C12 13.500 11 12 11 10Z"/></svg></button>
    <button aria-label="语音"><svg width="18" height="24"><rect x="5" y="0" width="8" height="15" rx="4" fill="currentColor"/><path d="M1.500 9C1.500 20 16.500 20 16.500 9M6 22.500H12" fill="none" stroke="currentColor" stroke-width="2"/></svg></button>
    <button aria-label="键盘"><svg width="22" height="18"><rect x="1" y="1" width="20" height="16" rx="2" fill="none" stroke="currentColor" stroke-width="2"/><path d="M4 5.500H18M4 9H18M4 13H6M8 13H15M16 13H18" stroke="currentColor" stroke-width="2.200" stroke-dasharray="2.500 1"/></svg></button>
    <button aria-label="皮肤"><svg width="22" height="21"><path d="M7 0Q11 4 15 0L21.500 3.500V10H17.500V19Q17.500 21 15.500 21H6.500Q4.500 21 4.500 19V10H.5V3.500Z" fill="currentColor"/></svg></button>
    <button aria-label="工具箱"><svg width="20" height="20" fill="currentColor"><rect x="0" y="0" width="9" height="9" rx="2.500"/><rect x="0" y="11" width="9" height="9" rx="2.500"/><rect x="11" y="11" width="9" height="9" rx="2.500"/><rect x="12" y="1" width="7" height="7" rx="2" fill="none" stroke="currentColor" stroke-width="2"/></svg></button>
  </div>
</div>
</body>
</html>
